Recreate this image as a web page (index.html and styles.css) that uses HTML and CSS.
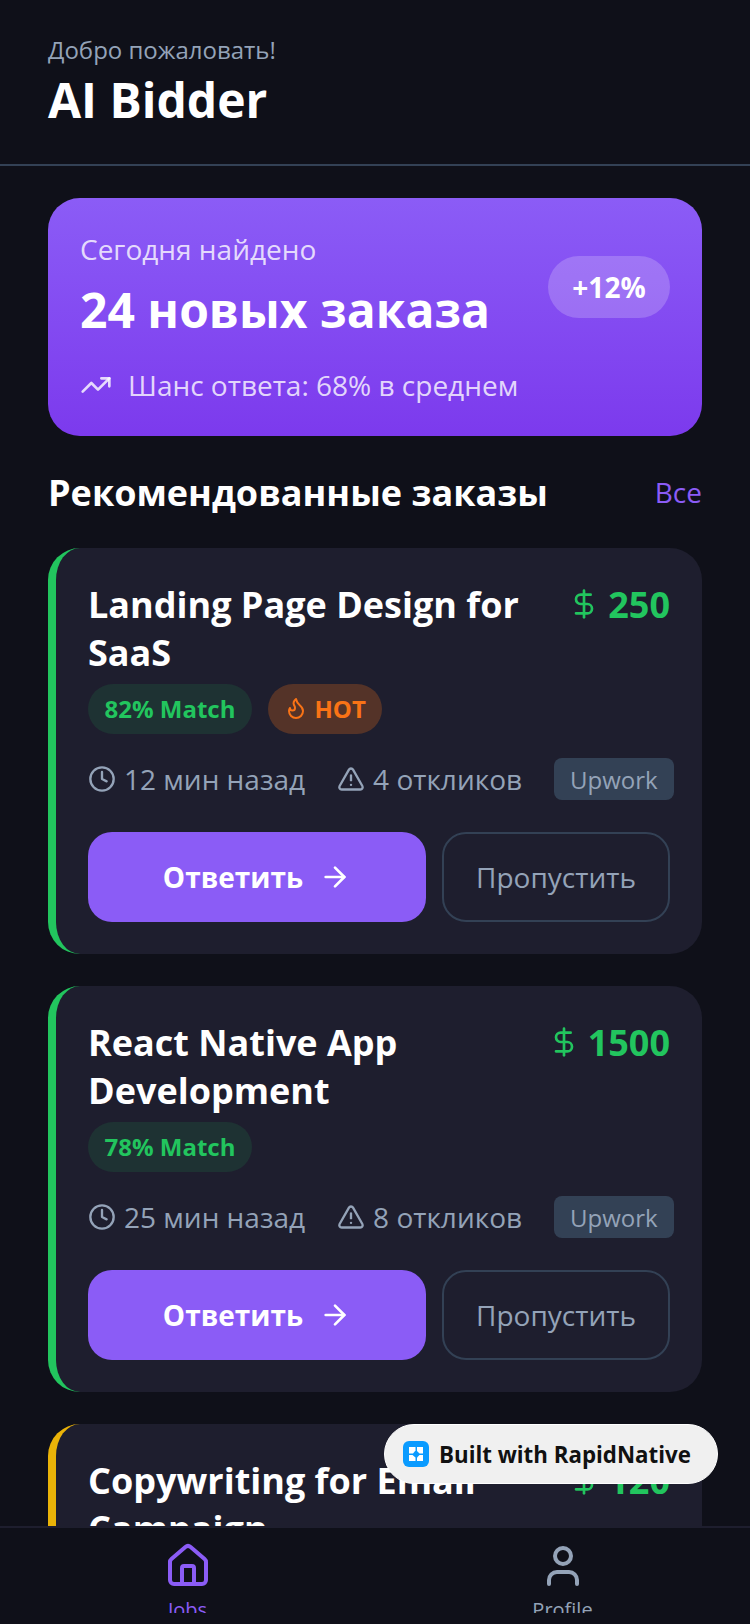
FILE: index.html
```html
<!DOCTYPE html>
<html lang="ru">
<head>
<meta charset="utf-8">
<title>AI Bidder</title>
<link rel="stylesheet" href="styles.css">
</head>
<body>
<div class="app">
  <header class="header">
    <p class="welcome">Добро пожаловать!</p>
    <h1 class="brand">AI Bidder</h1>
  </header>

  <main class="feed">
    <section class="hero">
      <div class="hero-top">
        <div>
          <p class="hero-label">Сегодня найдено</p>
          <p class="hero-count">24 новых заказа</p>
        </div>
        <span class="hero-delta">+12%</span>
      </div>
      <div class="hero-foot">
        <svg class="icon icon-32" viewBox="0 0 24 24"><path d="M16 7h6v6"/><path d="m22 7-8.5 8.500-5-5L2 17"/></svg>
        <span>Шанс ответа: 68% в среднем</span>
      </div>
    </section>

    <div class="section-head">
      <h2 class="section-title">Рекомендованные заказы</h2>
      <a class="section-link">Все</a>
    </div>

    <article class="job job-green">
      <div class="job-top">
        <h3 class="job-title">Landing Page Design for SaaS</h3>
        <div class="price">
          <svg class="icon icon-32" viewBox="0 0 24 24"><line x1="12" x2="12" y1="2" y2="22"/><path d="M17 5H9.500a3.500 3.500 0 0 0 0 7h5a3.500 3.500 0 0 1 0 7H6"/></svg>
          <span>250</span>
        </div>
      </div>
      <div class="tags">
        <span class="tag tag-match">82% Match</span>
        <span class="tag tag-hot">
          <svg class="icon icon-24" viewBox="0 0 24 24"><path d="M8.500 14.500A2.500 2.500 0 0 0 11 12c0-1.380-.5-2-1-3-1.072-2.143-.224-4.054 2-6 .5 2.500 2 4.900 4 6.500 2 1.600 3 3.500 3 5.500a7 7 0 1 1-14 0c0-1.153.433-2.294 1-3a2.500 2.500 0 0 0 2.500 2.500z"/></svg>
          HOT
        </span>
      </div>
      <div class="meta">
        <span class="meta-item">
          <svg class="icon icon-28" viewBox="0 0 24 24"><circle cx="12" cy="12" r="10"/><polyline points="12 6 12 12 16 14"/></svg>
          12 мин назад
        </span>
        <span class="meta-item">
          <svg class="icon icon-28" viewBox="0 0 24 24"><path d="m21.730 18-8-14a2 2 0 0 0-3.480 0l-8 14A2 2 0 0 0 4 21h16a2 2 0 0 0 1.730-3"/><path d="M12 9v4"/><path d="M12 17h.01"/></svg>
          4 откликов
        </span>
        <span class="source">Upwork</span>
      </div>
      <div class="actions">
        <button class="btn btn-primary">Ответить
          <svg class="icon icon-32" viewBox="0 0 24 24"><path d="M5 12h14"/><path d="m12 5 7 7-7 7"/></svg>
        </button>
        <button class="btn btn-ghost">Пропустить</button>
      </div>
    </article>

    <article class="job job-green">
      <div class="job-top">
        <h3 class="job-title">React Native App Development</h3>
        <div class="price">
          <svg class="icon icon-32" viewBox="0 0 24 24"><line x1="12" x2="12" y1="2" y2="22"/><path d="M17 5H9.500a3.500 3.500 0 0 0 0 7h5a3.500 3.500 0 0 1 0 7H6"/></svg>
          <span>1500</span>
        </div>
      </div>
      <div class="tags">
        <span class="tag tag-match">78% Match</span>
      </div>
      <div class="meta">
        <span class="meta-item">
          <svg class="icon icon-28" viewBox="0 0 24 24"><circle cx="12" cy="12" r="10"/><polyline points="12 6 12 12 16 14"/></svg>
          25 мин назад
        </span>
        <span class="meta-item">
          <svg class="icon icon-28" viewBox="0 0 24 24"><path d="m21.730 18-8-14a2 2 0 0 0-3.480 0l-8 14A2 2 0 0 0 4 21h16a2 2 0 0 0 1.730-3"/><path d="M12 9v4"/><path d="M12 17h.01"/></svg>
          8 откликов
        </span>
        <span class="source">Upwork</span>
      </div>
      <div class="actions">
        <button class="btn btn-primary">Ответить
          <svg class="icon icon-32" viewBox="0 0 24 24"><path d="M5 12h14"/><path d="m12 5 7 7-7 7"/></svg>
        </button>
        <button class="btn btn-ghost">Пропустить</button>
      </div>
    </article>

    <article class="job job-amber">
      <div class="job-top">
        <h3 class="job-title">Copywriting for Email Campaign</h3>
        <div class="price">
          <svg class="icon icon-32" viewBox="0 0 24 24"><line x1="12" x2="12" y1="2" y2="22"/><path d="M17 5H9.500a3.500 3.500 0 0 0 0 7h5a3.500 3.500 0 0 1 0 7H6"/></svg>
          <span>120</span>
        </div>
      </div>
    </article>
  </main>

  <nav class="tabbar">
    <a class="tab tab-active">
      <svg class="icon icon-48" viewBox="0 0 24 24"><path d="M15 21v-8a1 1 0 0 0-1-1h-4a1 1 0 0 0-1 1v8"/><path d="M3 10a2 2 0 0 1 .709-1.528l7-5.999a2 2 0 0 1 2.582 0l7 5.999A2 2 0 0 1 21 10v9a2 2 0 0 1-2 2H5a2 2 0 0 1-2-2z"/></svg>
      <span class="tab-label">Jobs</span>
    </a>
    <a class="tab">
      <svg class="icon icon-48" viewBox="0 0 24 24"><path d="M19 21v-2a4 4 0 0 0-4-4H9a4 4 0 0 0-4 4v2"/><circle cx="12" cy="7" r="4"/></svg>
      <span class="tab-label">Profile</span>
    </a>
  </nav>

  <div class="built-badge">
    <svg class="built-logo" viewBox="0 0 26 26"><rect width="26" height="26" rx="6" fill="#0a9bff"/><path d="M6 6h6.500v3.500L10 12.500H6z" fill="#fff"/><path d="M14 6h6v6.500h-3.500L14 10z" fill="#fff"/><path d="M6 14h3.500l3 2.500V20H6z" fill="#fff"/><path d="M16.500 14H20v6h-6v-3.500z" fill="#fff"/></svg>
    <span class="built-text">Built with RapidNative</span>
  </div>
</div>
</body>
</html>
```
FILE: styles.css
```css
* { box-sizing: border-box; }

html, body {
  margin: 0;
  height: 100%;
  background: #0f1019;
}

body {
  font-family: "Open Sans", "Noto Sans", sans-serif;
  color: #fff;
}

p, h1, h2, h3 { margin: 0; }

.app {
  position: relative;
  width: 750px;
  height: 1624px;
  display: flex;
  flex-direction: column;
  overflow: hidden;
}

.icon {
  fill: none;
  stroke: currentColor;
  stroke-width: 2;
  stroke-linecap: round;
  stroke-linejoin: round;
  flex: none;
}
.icon-24 { width: 24px; height: 24px; }
.icon-28 { width: 28px; height: 28px; }
.icon-32 { width: 32px; height: 32px; }
.icon-48 { width: 48px; height: 48px; }

/* Header */
.header {
  height: 166px;
  flex: none;
  padding: 32px 48px 0;
  border-bottom: 2px solid #334155;
}
.welcome {
  font-size: 24px;
  line-height: 36px;
  color: #94a3b8;
}
.brand {
  font-size: 48px;
  line-height: 64px;
  font-weight: 700;
}

/* Scrolling feed */
.feed {
  flex: 1;
  min-height: 0;
  overflow: hidden;
  padding: 32px 48px 0;
}

.hero {
  height: 238px;
  padding: 32px;
  border-radius: 32px;
  background: linear-gradient(180deg, #8b5cf6, #7c3aed);
}
.hero-top {
  display: flex;
  align-items: center;
  justify-content: space-between;
}
.hero-label {
  font-size: 28px;
  line-height: 38px;
  color: rgba(255, 255, 255, 0.8);
}
.hero-count {
  margin-top: 10px;
  font-size: 48px;
  line-height: 64px;
  font-weight: 700;
}
.hero-delta {
  width: 122px;
  height: 62px;
  margin-top: 2px;
  display: flex;
  align-items: center;
  justify-content: center;
  border-radius: 31px;
  background: rgba(255, 255, 255, 0.2);
  font-size: 28px;
  font-weight: 700;
}
.hero-foot {
  margin-top: 23px;
  display: flex;
  align-items: center;
  gap: 16px;
  font-size: 28px;
  line-height: 40px;
  color: rgba(255, 255, 255, 0.8);
}

.section-head {
  margin-top: 32px;
  height: 48px;
  display: flex;
  align-items: center;
  justify-content: space-between;
}
.section-title {
  font-size: 36px;
  font-weight: 700;
}
.section-link {
  font-size: 28px;
  color: #8b5cf6;
}

/* Job cards */
.job {
  margin-top: 32px;
  padding: 32px;
  border-radius: 32px;
  border-left: 8px solid;
  background: #1e1e2e;
}
.job-green { border-left-color: #22c55e; }
.job-amber { border-left-color: #eab308; }

.job-top {
  display: flex;
  justify-content: space-between;
  gap: 16px;
  padding-top: 1px;
}
.job-title {
  font-size: 36px;
  line-height: 48px;
  font-weight: 700;
}
.price {
  display: flex;
  align-items: center;
  gap: 8px;
  height: 46px;
  flex: none;
  font-size: 36px;
  font-weight: 700;
  color: #22c55e;
}

.tags {
  margin-top: 7px;
  display: flex;
  gap: 16px;
}
.tag {
  height: 50px;
  padding: 0 16.5px 2px;
  display: flex;
  align-items: center;
  gap: 6px;
  border-radius: 25px;
  font-size: 24px;
  font-weight: 700;
}
.tag-match { color: #22c55e; background: rgba(34, 197, 94, 0.12); }
.tag-hot { color: #f97316; background: rgba(249, 115, 22, 0.25); }

.meta {
  margin-top: 24px;
  height: 42px;
  display: flex;
  align-items: center;
  gap: 32px;
  color: #94a3b8;
}
.meta-item {
  display: flex;
  align-items: center;
  gap: 8px;
  flex: none;
  font-size: 28px;
  white-space: nowrap;
}
.source {
  height: 42px;
  padding: 0 16px;
  display: flex;
  align-items: center;
  flex: none;
  border-radius: 8px;
  background: #334155;
  font-size: 24px;
}

.actions {
  margin-top: 32px;
  display: flex;
  gap: 16px;
}
.btn {
  height: 90px;
  display: flex;
  align-items: center;
  justify-content: center;
  gap: 16px;
  border-radius: 24px;
  font-family: inherit;
  font-size: 28px;
}
.btn-primary {
  flex: 1;
  border: 0;
  background: #8b5cf6;
  color: #fff;
  font-weight: 700;
}
.btn-ghost {
  width: 228px;
  border: 2px solid #334155;
  background: transparent;
  color: #94a3b8;
}

/* Bottom tabs */
.tabbar {
  height: 98px;
  flex: none;
  display: flex;
  background: #0f1019;
  border-top: 2px solid #1e1e2e;
}
.tab {
  flex: 1;
  height: 85px;
  padding-top: 14px;
  overflow: hidden;
  display: flex;
  flex-direction: column;
  align-items: center;
  color: #94a3b8;
}
.tab-active { color: #8b5cf6; }
.tab-label {
  margin-top: 6px;
  font-size: 20px;
  line-height: 28px;
}

/* Floating attribution pill */
.built-badge {
  position: absolute;
  left: 384px;
  top: 1424px;
  width: 334px;
  height: 60px;
  display: flex;
  align-items: center;
  gap: 10px;
  padding: 0 18px;
  border-radius: 30px;
  background: #f0f0f0;
  border: 1px solid #fff;
  color: #111;
}
.built-logo { width: 26px; height: 26px; flex: none; }
.built-text {
  font-size: 22.3px;
  font-weight: 700;
  white-space: nowrap;
}
```
